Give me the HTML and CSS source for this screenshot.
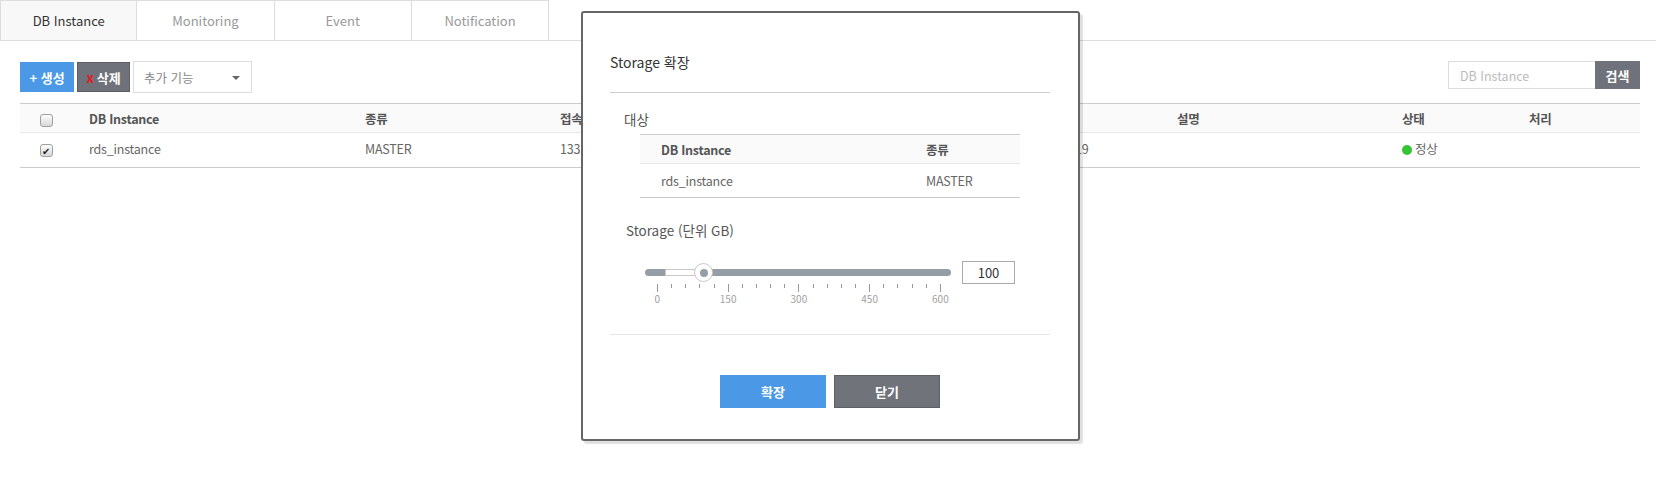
FILE: index.html
```html
<!DOCTYPE html>
<html lang="ko">
<head>
<meta charset="utf-8">
<title>DB Instance</title>
<link rel="stylesheet" href="styles.css">
</head>
<body>
<div class="page">
  <nav class="tabs">
    <div class="tab active">DB Instance</div>
    <div class="tab">Monitoring</div>
    <div class="tab">Event</div>
    <div class="tab">Notification</div>
  </nav>

  <main class="content">
    <div class="toolbar">
      <div class="actions">
        <button class="btn btn-blue">+ 생성</button>
        <button class="btn btn-gray"><span class="x">x</span> 삭제</button>
        <div class="select">추가 기능<span class="caret"></span></div>
      </div>
      <div class="search">
        <div class="search-input">DB Instance</div>
        <button class="search-btn">검색</button>
      </div>
    </div>

    <table class="grid">
      <colgroup>
        <col class="c-check">
        <col class="c-name">
        <col class="c-type">
        <col class="c-conn">
        <col class="c-date">
        <col class="c-desc">
        <col class="c-state">
        <col class="c-act">
      </colgroup>
      <thead>
        <tr>
          <th class="center"><span class="cb"></span></th>
          <th>DB Instance</th>
          <th>종류</th>
          <th>접속 정보</th>
          <th>생성 일시</th>
          <th>설명</th>
          <th>상태</th>
          <th>처리</th>
        </tr>
      </thead>
      <tbody>
        <tr>
          <td class="center"><span class="cb checked">✔</span></td>
          <td>rds_instance</td>
          <td>MASTER</td>
          <td>133.186.143.201</td>
          <td>2017-05-22 10:30:19</td>
          <td></td>
          <td><span class="dot"></span>정상</td>
          <td></td>
        </tr>
      </tbody>
    </table>
  </main>

  <section class="modal">
    <header class="modal-head">Storage 확장</header>
    <div class="modal-body">
      <div class="label">대상</div>
      <table class="mini">
        <colgroup>
          <col class="m-name">
          <col class="m-type">
        </colgroup>
        <thead>
          <tr><th>DB Instance</th><th>종류</th></tr>
        </thead>
        <tbody>
          <tr><td>rds_instance</td><td>MASTER</td></tr>
        </tbody>
      </table>

      <div class="label storage-label">Storage (단위 GB)</div>
      <div class="slider-row">
        <div class="slider">
          <div class="track"></div>
          <div class="range"></div>
          <div class="handle"><span class="handle-dot"></span></div>
        </div>
        <div class="value-box">100</div>
      </div>
      <div class="ticks">
        <i class="major"></i><i></i><i></i><i></i><i></i>
        <i class="major"></i><i></i><i></i><i></i><i></i>
        <i class="major"></i><i></i><i></i><i></i><i></i>
        <i class="major"></i><i></i><i></i><i></i><i></i>
        <i class="major"></i>
      </div>
      <div class="tick-labels">
        <span>0</span><span>150</span><span>300</span><span>450</span><span>600</span>
      </div>
    </div>
    <footer class="modal-foot">
      <button class="mbtn mbtn-blue">확장</button>
      <button class="mbtn mbtn-gray">닫기</button>
    </footer>
  </section>
</div>
</body>
</html>
```

FILE: styles.css
```css
* { box-sizing: border-box; }

html, body {
  margin: 0;
  padding: 0;
  background: #fff;
}

body {
  font-family: "Noto Sans CJK KR", "Noto Sans", sans-serif;
  font-size: 13px;
  color: #666;
}

.page {
  position: relative;
  width: 1656px;
  height: 483px;
  overflow: hidden;
}

/* Tabs */
.tabs {
  display: flex;
  border-bottom: 1px solid #ddd;
}

.tab {
  width: 137.3px;
  height: 40px;
  border-top: 1px solid #ddd;
  border-right: 1px solid #ddd;
  display: flex;
  align-items: center;
  justify-content: center;
  font-size: 13px;
  color: #999;
  background: #fff;
}

.tab:first-child { border-left: 1px solid #ddd; }

.tab.active {
  color: #333;
  background: #f8f8f8;
}

/* Content */
.content {
  margin-left: 20px;
  width: 1620px;
}

.toolbar {
  display: flex;
  justify-content: space-between;
  align-items: flex-start;
  margin-top: 20px;
}

.actions {
  display: flex;
  align-items: center;
  gap: 3px;
}

.btn {
  height: 30px;
  border: 0;
  padding: 0;
  font-family: inherit;
  font-size: 13px;
  font-weight: bold;
  color: #fff;
  display: flex;
  align-items: center;
  justify-content: center;
}

.btn-blue {
  width: 54px;
  background: #4a98e6;
}

.btn-gray {
  width: 53px;
  background: #6f727a;
  border: 1px solid #5c5f66;
}

.btn .x {
  color: #e8181c;
  margin-right: 3px;
}

.select {
  width: 119px;
  height: 32px;
  border: 1px solid #ddd;
  background: #fff;
  display: flex;
  align-items: center;
  padding-left: 10px;
  font-size: 12.5px;
  color: #888;
  position: relative;
}

.caret {
  position: absolute;
  right: 11px;
  top: 14px;
  width: 0;
  height: 0;
  border-left: 4px solid transparent;
  border-right: 4px solid transparent;
  border-top: 4px solid #666;
}

.search {
  display: flex;
}

.search-input {
  width: 147px;
  height: 28px;
  border: 1px solid #ddd;
  border-right: 0;
  display: flex;
  align-items: center;
  padding-left: 11px;
  font-size: 12.5px;
  color: #bbb;
}

.search-btn {
  width: 45px;
  height: 28px;
  border: 0;
  padding: 0;
  background: #6f727a;
  color: #fff;
  font-family: inherit;
  font-size: 13px;
  font-weight: bold;
}

/* Main grid */
.grid {
  margin-top: 10px;
  width: 1620px;
  border-collapse: collapse;
  table-layout: fixed;
}

.c-check { width: 52px; }
.c-name { width: 276px; }
.c-type { width: 195px; }
.c-conn { width: 416px; }
.c-date { width: 201px; }
.c-desc { width: 225px; }
.c-state { width: 127px; }
.c-act { width: 128px; }

.grid th,
.grid td {
  padding: 0 0 0 17px;
  text-align: left;
  white-space: nowrap;
  overflow: hidden;
}

.grid th {
  height: 29px;
  background: #fafafa;
  border-top: 1px solid #ccc;
  border-bottom: 1px solid #e8e8e8;
  font-size: 12.5px;
  letter-spacing: -0.25px;
  font-weight: bold;
  color: #555;
}

.grid td {
  height: 35px;
  padding-bottom: 3px;
  border-bottom: 1px solid #ccc;
  font-size: 12.5px;
  letter-spacing: -0.2px;
  color: #666;
}

.grid .center {
  padding: 0 0 3px 0;
  text-align: center;
}

.grid th.center { padding: 0; }

.cb {
  display: inline-flex;
  align-items: center;
  justify-content: center;
  width: 13px;
  height: 13px;
  border: 1px solid #a0a0a0;
  border-radius: 3px;
  background: linear-gradient(#fdfdfd, #d8d8d8);
  vertical-align: middle;
  font-size: 10px;
  line-height: 1;
  color: #222;
}

.dot {
  display: inline-block;
  width: 10px;
  height: 10px;
  border-radius: 50%;
  background: #34c434;
  margin-right: 3px;
  vertical-align: -1px;
}

/* Modal */
.modal {
  position: absolute;
  left: 581px;
  top: 11px;
  width: 499px;
  height: 430px;
  background: #fff;
  border: 2px solid #666;
  border-radius: 3px;
  box-shadow: 3px 3px 1px rgba(0, 0, 0, 0.12);
  padding: 0 28px 0 27px;
  display: flex;
  flex-direction: column;
}

.modal-head {
  padding-top: 39px;
  padding-bottom: 20px;
  line-height: 20px;
  font-size: 14px;
  color: #333;
  border-bottom: 1px solid #ccc;
}

.modal-body {
  border-bottom: 1px solid #e6e6e6;
  padding-bottom: 29px;
}

.label {
  margin-top: 16px;
  margin-left: 14px;
  line-height: 20px;
  font-size: 13.5px;
  color: #555;
}

.mini {
  margin-top: 5px;
  margin-left: 30px;
  width: 380px;
  border-collapse: collapse;
  table-layout: fixed;
}

.m-name { width: 286px; }
.m-type { width: 94px; }

.mini th,
.mini td {
  padding: 0 0 0 21px;
  text-align: left;
  white-space: nowrap;
}

.mini th:last-child,
.mini td:last-child { padding-left: 0; }

.mini th {
  height: 29px;
  background: #fafafa;
  border-top: 1px solid #ccc;
  border-bottom: 1px solid #e8e8e8;
  font-size: 12.5px;
  letter-spacing: -0.25px;
  font-weight: bold;
  color: #555;
}

.mini td {
  height: 34px;
  padding-bottom: 1px;
  border-bottom: 1px solid #ccc;
  font-size: 12.5px;
  letter-spacing: -0.2px;
  color: #666;
}

.storage-label {
  margin-top: 22px;
  margin-left: 16px;
}

.slider-row {
  display: flex;
  align-items: center;
  margin-top: 21px;
  margin-left: 35px;
  height: 23px;
}

.slider {
  position: relative;
  width: 306px;
  height: 23px;
  display: flex;
  align-items: center;
}

.track {
  width: 100%;
  height: 7px;
  border-radius: 4px;
  background: #959ea6;
}

.range {
  position: absolute;
  left: 20px;
  top: 8px;
  width: 40px;
  height: 7px;
  background: #fff;
  border: 1px solid #c8c8c8;
}

.handle {
  position: absolute;
  left: 49px;
  top: 2px;
  width: 19px;
  height: 19px;
  border-radius: 50%;
  background: #fff;
  border: 1px solid #c8c8c8;
  display: flex;
  align-items: center;
  justify-content: center;
}

.handle-dot {
  width: 8px;
  height: 8px;
  border-radius: 50%;
  background: #959ea6;
}

.value-box {
  margin-left: 11px;
  width: 53px;
  height: 23px;
  border: 1px solid #aaa;
  display: flex;
  align-items: center;
  justify-content: center;
  font-size: 13px;
  color: #333;
}

.ticks {
  display: flex;
  justify-content: space-between;
  align-items: flex-start;
  margin-left: 47px;
  width: 284px;
  height: 8px;
}

.ticks i {
  display: block;
  width: 1px;
  height: 4px;
  background: #999;
}

.ticks i.major { height: 8px; }

.tick-labels {
  display: grid;
  grid-template-columns: repeat(5, 70.75px);
  margin-left: 12px;
  margin-top: 0;
  line-height: 13px;
  font-size: 10px;
  color: #a0a0a0;
  text-align: center;
}

.modal-foot {
  display: flex;
  justify-content: center;
  gap: 8px;
  margin-top: 40px;
}

.mbtn {
  width: 106px;
  height: 33px;
  border: 0;
  padding: 0;
  font-family: inherit;
  font-size: 13px;
  font-weight: bold;
  color: #fff;
}

.mbtn-blue { background: #4a98e6; }

.mbtn-gray {
  background: #71737b;
  border: 1px solid #5e6068;
}
```
